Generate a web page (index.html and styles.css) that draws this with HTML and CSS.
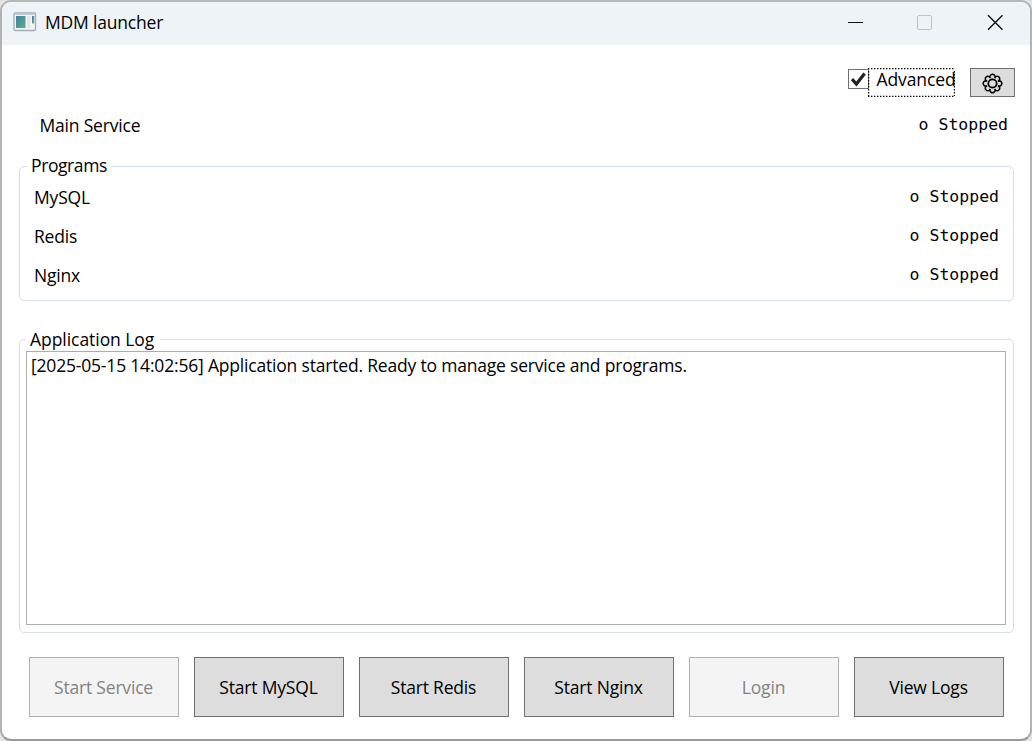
FILE: index.html
```html
<!DOCTYPE html>
<html lang="en">
<head>
<meta charset="utf-8">
<title>MDM launcher</title>
<link rel="stylesheet" href="styles.css">
</head>
<body>
<div class="window">
  <header class="titlebar">
    <svg class="app-icon" width="24" height="20" viewBox="0 0 24 20">
      <defs><linearGradient id="pane" x1="0" y1="0" x2="1" y2="1"><stop offset="0" stop-color="#3f7fa8"/><stop offset="1" stop-color="#5fb080"/></linearGradient></defs>
      <rect x="1" y="1" width="21.5" height="17.5" rx="1" fill="#f4f5f7" stroke="#a9adb5" stroke-width="1.4"/>
      <path d="M1.5 2.2H22" stroke="#c6cad2" stroke-width="1.4"/>
      <rect x="3" y="4" width="9.5" height="12" fill="url(#pane)"/>
      <rect x="14" y="4" width="3.5" height="12" fill="#e4e6e8"/>
      <rect x="19" y="4" width="2.2" height="7.5" fill="url(#pane)"/>
    </svg>
    <span class="title">MDM launcher</span>
    <svg class="controls" width="160" height="20" viewBox="0 0 160 20" fill="none">
      <path d="M2 10.5H17" stroke="#111"/>
      <rect x="71.5" y="3.5" width="14" height="14" rx="1.5" stroke="#c0c3c6"/>
      <path d="M142 3.2L156.5 17.7M156.5 3.2L142 17.7" stroke="#111" stroke-width="1.4"/>
    </svg>
  </header>
  <main class="content">
    <div class="toolbar">
      <label class="check">
        <svg width="21" height="20" viewBox="0 0 21 20"><rect x=".5" y=".5" width="20" height="19" fill="#fff" stroke="#707070"/><path d="M4 10.2L8.4 15L16.6 4.6" fill="none" stroke="#212121" stroke-width="3.2"/></svg>
        <span class="focus">
          <svg class="dots" width="87" height="29"><path d="M0 .5H87M0 28.5H87M.5 3V28M86.5 3V28" fill="none" stroke="#000" stroke-width="1.4" stroke-dasharray="1.4 1.6"/></svg>
          <span>Advanced</span>
        </span>
      </label>
      <button class="gear" aria-label="Settings">
        <svg width="21" height="21" viewBox="-10.5 -10.5 21 21" fill="none" stroke="#000" stroke-width="1.5">
          <circle r="4.2" stroke-width="1.8"/>
          <path d="M-2.2 -5.4A2.55 2.55 0 1 1 2.2 -5.4A2.55 2.55 0 1 1 5.4 -2.2A2.55 2.55 0 1 1 5.4 2.2A2.55 2.55 0 1 1 2.2 5.4A2.55 2.55 0 1 1 -2.2 5.4A2.55 2.55 0 1 1 -5.4 2.2A2.55 2.55 0 1 1 -5.4 -2.2A2.55 2.55 0 1 1 -2.2 -5.4Z"/>
        </svg>
      </button>
    </div>
    <div class="row main-row"><span class="name">Main Service</span><span class="status">o Stopped</span></div>
    <section class="group programs">
      <h2 class="legend legend-programs">Programs</h2>
      <div class="row"><span class="name">MySQL</span><span class="status">o Stopped</span></div>
      <div class="row"><span class="name">Redis</span><span class="status">o Stopped</span></div>
      <div class="row"><span class="name">Nginx</span><span class="status">o Stopped</span></div>
    </section>
    <section class="group log">
      <h2 class="legend legend-log">Application Log</h2>
      <div class="logbox">[2025-05-15 14:02:56] Application started. Ready to manage service and programs.</div>
    </section>
    <div class="actions">
      <button class="btn" disabled>Start Service</button>
      <button class="btn">Start MySQL</button>
      <button class="btn">Start Redis</button>
      <button class="btn">Start Nginx</button>
      <button class="btn" disabled>Login</button>
      <button class="btn">View Logs</button>
    </div>
  </main>
</div>
</body>
</html>
```
FILE: styles.css
```css
* { box-sizing: border-box; }
body {
  margin: 0;
  background: #e4e4e4;
  font: 17.5px/24px "Open Sans", "Noto Sans", sans-serif;
  letter-spacing: -0.19px;
  color: #000;
  overflow: hidden;
}
.window {
  width: 1032px;
  height: 741px;
  border: 2px solid #b2b2b2;
  border-top-color: #b8b8b8;
  border-bottom-color: #999;
  border-radius: 11px;
  background: #fff;
  overflow: hidden;
}
.titlebar {
  display: flex;
  align-items: center;
  height: 43px;
  padding: 0 24px 3px 11px;
  background: #eef3f8;
}
.title { margin-left: 8px; padding-bottom: 1px; }
.controls { margin-left: auto; }
.content { padding: 23px 15px 0 17px; }
.toolbar { display: flex; justify-content: flex-end; height: 29px; gap: 14px; }
.check { display: flex; }
.check > svg { margin-top: 1px; }
.focus { position: relative; width: 87px; height: 29px; padding-left: 7.5px; line-height: 22px; white-space: nowrap; letter-spacing: -0.1px; }
.dots { position: absolute; left: -1px; top: 0; }
.gear {
  display: flex;
  align-items: center;
  justify-content: center;
  width: 45px;
  height: 29px;
  padding: 1px 0 0;
  border: 1px solid #707070;
  background: #ddd;
}
.row { display: flex; justify-content: space-between; align-items: center; height: 39px; }
.main-row { height: 24px; margin-top: 17px; padding: 0 7px 0 20.5px; }
.name { padding-bottom: 2px; }
.status {
  padding-bottom: 2px;
  font: 16.5px/24px "DejaVu Sans Mono", monospace;
  letter-spacing: 0;
  white-space: pre;
}
.group { width: 995px; border: 1px solid #d5dfe5; border-radius: 5px; }
.programs { height: 135px; margin-top: 28px; padding: 0 14px; }
.legend {
  width: max-content;
  height: 24px;
  margin: -13px 0 0;
  padding: 0 6px 0 4px;
  background: #fff;
  font: inherit;
  white-space: nowrap;
}
.legend-programs { margin-left: -7px; padding-right: 4px; line-height: 22px; letter-spacing: -0.4px; }
.log { height: 294px; margin-top: 38px; padding: 0 7px 0 6px; }
.legend-log { line-height: 25px; letter-spacing: -0.05px; }
.logbox { position: relative; height: 274px; border: 1px solid #abadb3; padding: 1px 4px; background: #fff; white-space: nowrap; }
.actions { display: flex; gap: 15px; padding-left: 10px; margin-top: 24px; }
.btn {
  width: 150px;
  height: 60px;
  padding: 0 1px 1px 0;
  border: 1px solid #707070;
  background: #ddd;
  color: #000;
  font: inherit;
  letter-spacing: inherit;
}
.btn:disabled { border-color: #adb2b5; background: #f4f4f4; color: #838383; }
```
